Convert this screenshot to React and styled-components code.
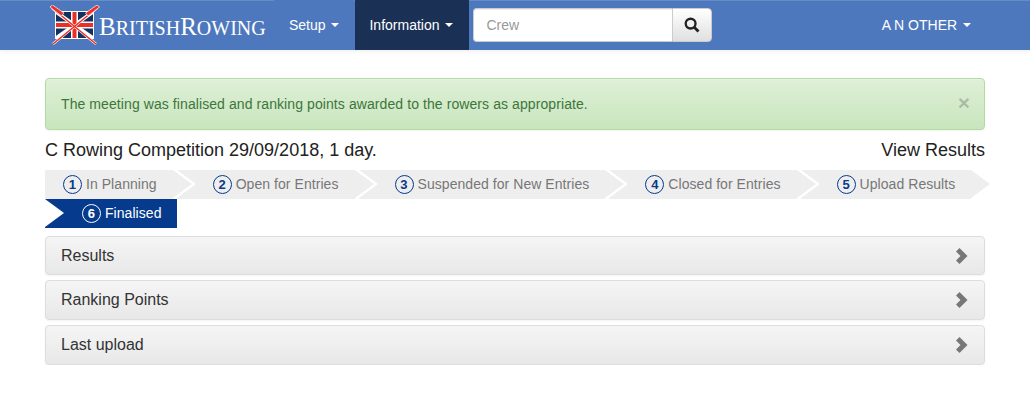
import React from "react";
import styled, { createGlobalStyle } from "styled-components";

const steps = [
  { n: 1, label: "In Planning" },
  { n: 2, label: "Open for Entries" },
  { n: 3, label: "Suspended for New Entries" },
  { n: 4, label: "Closed for Entries" },
  { n: 5, label: "Upload Results" },
  { n: 6, label: "Finalised", active: true },
];

const panels = ["Results", "Ranking Points", "Last upload"];

const Caret = styled.span`
  display: inline-block;
  width: 0;
  height: 0;
  margin-left: 2px;
  vertical-align: middle;
  border-top: 4px solid #fff;
  border-left: 4px solid transparent;
  border-right: 4px solid transparent;
`;

const Logo = () => (
  <LogoLink>
    <svg width="50" height="42" viewBox="0 0 50 42">
      <rect x="5" y="6" width="39" height="28" fill="#fff" />
      <rect x="6" y="7" width="37" height="26" fill="#14305e" />
      <path d="M6 7L43 33M43 7L6 33" stroke="#fff" strokeWidth="3.5" />
      <path d="M24.5 7V33M6 20H43" stroke="#fff" strokeWidth="7" />
      <path d="M24.5 7V33M6 20H43" stroke="#ea2f27" strokeWidth="4" />
      <path d="M3 39L47 3M46 39L2 3" stroke="#fff" strokeWidth="2.4" />
      <path d="M3 39L47 3M46 39L2 3" stroke="#ea2f27" strokeWidth="1.5" />
      <path d="M0 2L2.5 0L14 8L11.5 11ZM49.5 2L47 0L35.5 8L38 11Z" fill="#ea2f27" stroke="#fff" strokeWidth="0.7" />
    </svg>
    <LogoText>
      <LogoCap>B</LogoCap>RITISH<LogoCap>R</LogoCap>OWING
    </LogoText>
  </LogoLink>
);

const App = () => (
  <>
    <GlobalStyle />
    <Navbar>
      <Logo />
      <NavLink>
        Setup <Caret />
      </NavLink>
      <NavLink $active>
        Information <Caret />
      </NavLink>
      <SearchForm>
        <SearchInput placeholder="Crew" />
        <SearchButton aria-label="Search">
          <svg width="16" height="16" viewBox="0 0 15 15">
            <circle cx="6.2" cy="6.2" r="4.6" fill="none" stroke="#222" strokeWidth="2.2" />
            <path d="M9.6 9.6L13.6 13.6" stroke="#222" strokeWidth="2.6" />
          </svg>
        </SearchButton>
      </SearchForm>
      <UserLink>
        A N OTHER <Caret />
      </UserLink>
    </Navbar>
    <Container>
      <Alert>
        The meeting was finalised and ranking points awarded to the rowers as appropriate.
        <CloseMark>×</CloseMark>
      </Alert>
      <TitleRow>
        <span>C Rowing Competition 29/09/2018, 1 day.</span>
        <span>View Results</span>
      </TitleRow>
      <Wizard>
        {steps.map((s) => (
          <Step key={s.n} $active={s.active}>
            <StepNumber $active={s.active}>{s.n}</StepNumber>
            <StepLabel>{s.label}</StepLabel>
          </Step>
        ))}
      </Wizard>
      <Panels>
        {panels.map((p) => (
          <Panel key={p}>
            {p}
            <svg width="12" height="16" viewBox="0 0 12 16">
              <path d="M0 3.5L3.5 0L11.5 8L3.5 16L0 12.5L4.5 8Z" fill="#777" />
            </svg>
          </Panel>
        ))}
      </Panels>
    </Container>
  </>
);

export default App;

const GlobalStyle = createGlobalStyle`
  body {
    margin: 0;
    background: #fff;
    color: #333;
    font-family: "Liberation Sans", Arial, sans-serif;
    font-size: 14px;
  }
  * {
    box-sizing: border-box;
  }
`;

const Navbar = styled.nav`
  display: flex;
  height: 50px;
  padding-left: 50px;
  background: #4e78bd;
  box-shadow: inset 0 1px 0 rgba(255, 255, 255, 0.15), 0 1px 5px rgba(0, 0, 0, 0.08);
`;

const LogoLink = styled.a`
  display: flex;
  align-items: center;
  width: 224px;
  padding-top: 1px;
`;

const LogoText = styled.span`
  margin-left: -1px;
  padding-top: 3px;
  color: #fff;
  font-family: "Liberation Serif", serif;
  font-size: 20px;
  white-space: nowrap;
`;

const LogoCap = styled.span`
  font-size: 25px;
`;

const NavLink = styled.a`
  display: flex;
  align-items: center;
  height: 50px;
  margin-left: ${(p) => (p.$active ? "1px" : "0")};
  padding: ${(p) => (p.$active ? "0 16px 0 14px" : "0 15px")};
  white-space: pre;
  color: #fff;
  background: ${(p) => (p.$active ? "#1a3055" : "#4e78bd")};
`;

const SearchForm = styled.form`
  display: flex;
  width: 239px;
  height: 34px;
  margin: 8px 0 0 4px;
`;

const SearchInput = styled.input`
  flex: 1;
  min-width: 0;
  padding: 6px 12px;
  border: 1px solid #ccc;
  border-right: 0;
  border-radius: 4px 0 0 4px;
  background: #fff;
  color: #555;
  font-family: inherit;
  font-size: 14px;
  box-shadow: inset 0 1px 1px rgba(0, 0, 0, 0.075);
  &::placeholder {
    color: #999;
    opacity: 1;
  }
`;

const SearchButton = styled.button`
  display: flex;
  align-items: center;
  justify-content: center;
  width: 40px;
  padding: 0;
  border: 1px solid #ccc;
  border-radius: 0 4px 4px 0;
  background: linear-gradient(to bottom, #fff, #e0e0e0);
`;

const UserLink = styled(NavLink)`
  margin-left: auto;
  margin-right: 44px;
  background: none;
`;

const Container = styled.main`
  width: 940px;
  margin: 0 0 0 45px;
  padding-top: 28px;
`;

const Alert = styled.div`
  position: relative;
  height: 52px;
  padding: 17px 15px;
  border: 1px solid #b2dba1;
  border-radius: 4px;
  color: #3c763d;
  letter-spacing: 0.085px;
  background: linear-gradient(to bottom, #dff0d8, #c8e5bc);
  box-shadow: inset 0 1px 0 rgba(255, 255, 255, 0.25), 0 1px 2px rgba(0, 0, 0, 0.05);
`;

const CloseMark = styled.span`
  position: absolute;
  top: 12px;
  right: 14px;
  color: #000;
  opacity: 0.2;
  font-size: 21px;
  font-weight: bold;
  line-height: 24px;
  text-shadow: 0 1px 0 #fff;
`;

const TitleRow = styled.div`
  display: flex;
  justify-content: space-between;
  height: 40px;
  padding-top: 10px;
  color: #222;
  font-size: 18px;
  line-height: 20px;
`;

const Wizard = styled.div`
  display: flex;
  flex-wrap: wrap;
  column-gap: 4px;
`;

const Step = styled.div`
  position: relative;
  display: flex;
  align-items: center;
  gap: 4px;
  height: 29px;
  padding: 0 16px 0 36px;
  color: ${(p) => (p.$active ? "#fff" : "#777")};
  background: ${(p) => (p.$active ? "#063a8c" : "#eee")};
  letter-spacing: 0.055px;
  white-space: nowrap;

  &:first-child {
    padding-left: 18px;
  }
  &:last-child {
    padding: 0 15px 0 37px;
  }
  &:first-child::before {
    display: none;
  }
  &::before {
    content: "";
    position: absolute;
    left: 0;
    top: 0;
    border-top: 14.5px solid transparent;
    border-bottom: 14.5px solid transparent;
    border-left: 19px solid #fff;
  }
  &::after {
    content: "";
    position: absolute;
    z-index: 1;
    right: -19px;
    top: 0;
    border-top: 14.5px solid transparent;
    border-bottom: 14.5px solid transparent;
    border-left: 19px solid #eee;
    ${(p) => p.$active && "display: none;"}
  }
`;

const StepNumber = styled.span`
  display: flex;
  align-items: center;
  justify-content: center;
  width: 19px;
  height: 19px;
  border: 1px solid ${(p) => (p.$active ? "#fff" : "#063a8c")};
  border-radius: 50%;
  color: ${(p) => (p.$active ? "#fff" : "#063a8c")};
  font-size: 13px;
  font-weight: bold;
`;

const StepLabel = styled.span`
  margin-top: -2px;
`;

const Panels = styled.div`
  display: flex;
  flex-direction: column;
  gap: 5px;
  margin-top: 7.8px;
`;

const Panel = styled.div`
  display: flex;
  align-items: center;
  justify-content: space-between;
  height: 39.6px;
  padding: 0 16px 0 15px;
  border: 1px solid #ddd;
  border-radius: 4px;
  color: #333;
  font-size: 16px;
  background: linear-gradient(to bottom, #f5f5f5, #e8e8e8);
  box-shadow: 0 1px 2px rgba(0, 0, 0, 0.05);
`;
